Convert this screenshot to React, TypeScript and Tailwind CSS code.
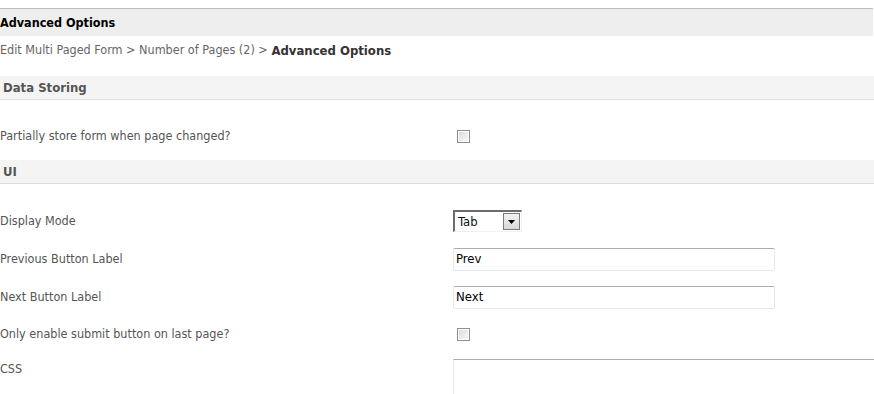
import React from 'react';

const font = { fontFamily: '"DejaVu Sans Condensed", Tahoma, "Liberation Sans", sans-serif' };

const SectionBar = ({ title }: { title: string }) => (
  <div className="flex h-[24px] items-center border-b border-[#dddddd] bg-[#f4f4f4] pl-[3px] text-[13px] font-bold text-[#555555]">
    {title}
  </div>
);

const Row = ({ label, children, h = 38 }: { label: string; children?: React.ReactNode; h?: number }) => (
  <div className="flex items-center" style={{ height: h }}>
    <div className="w-[453px] shrink-0 text-[12.5px] text-[#555555]">{label}</div>
    <div className="flex flex-1 items-center">{children}</div>
  </div>
);

const Checkbox = () => (
  <div className="ml-[4px] h-[13px] w-[13px] border border-[#8f8f8f] bg-white p-[1px]">
    <div className="h-full w-full bg-gradient-to-br from-[#dcdcdc] to-[#f8f8f8]" />
  </div>
);

const TextInput = ({ value }: { value: string }) => (
  <div className="flex h-[23px] w-[322px] items-center rounded-[2px] border border-[#e3e9ef] border-t-[#abadb3] bg-white pl-[2px] text-[13px] text-black">
    {value}
  </div>
);

const Select = () => (
  <div className="flex h-[22px] w-[69px] items-stretch border-l-2 border-t-2 border-[#6d6d6d] border-r border-r-[#f0f0f0] border-b border-b-[#f0f0f0] bg-white">
    <div className="flex flex-1 items-center pl-[3px] text-[13px] text-[#111]">Tab</div>
    <div className="my-[1px] mr-[1px] flex w-[17px] items-center justify-center border border-[#7a7a7a] bg-gradient-to-b from-[#f2f2f2] to-[#d8d8d8]">
      <svg width="7" height="4" viewBox="0 0 7 4">
        <path d="M0 0h7L3.5 4z" fill="#000" />
      </svg>
    </div>
  </div>
);

export default function App() {
  return (
    <div className="h-[394px] w-[874px] overflow-hidden bg-white" style={font}>
      <div className="h-[8px]" />
      <div className="mr-[1px] flex h-[28px] items-center border-t border-[#bbbbbb] bg-[#eeeeee] pt-[1px] text-[12.5px] font-bold text-black">
        Advanced Options
      </div>
      <div className="flex h-[29px] items-center text-[12.5px] text-[#666666]">
        Edit Multi Paged Form &gt; Number of Pages (2) &gt;&nbsp;
        <span className="text-[13px] font-bold text-[#333333]">Advanced Options</span>
      </div>
      <div className="h-[11px]" />
      <SectionBar title="Data Storing" />
      <div className="h-[17px]" />
      <Row label="Partially store form when page changed?" h={38}>
        <Checkbox />
      </Row>
      <div className="h-[5px]" />
      <SectionBar title="UI" />
      <div className="h-[18px]" />
      <Row label="Display Mode" h={38}>
        <Select />
      </Row>
      <Row label="Previous Button Label" h={38}>
        <TextInput value="Prev" />
      </Row>
      <Row label="Next Button Label" h={38}>
        <TextInput value="Next" />
      </Row>
      <Row label="Only enable submit button on last page?" h={36}>
        <Checkbox />
      </Row>
      <div className="flex pt-[7px]">
        <div className="w-[453px] shrink-0 pt-[1px] text-[12.5px] text-[#555555]">CSS</div>
        <div className="h-[80px] flex-1 border-l border-t border-[#e3e9ef] border-t-[#abadb3]" />
      </div>
    </div>
  );
}
